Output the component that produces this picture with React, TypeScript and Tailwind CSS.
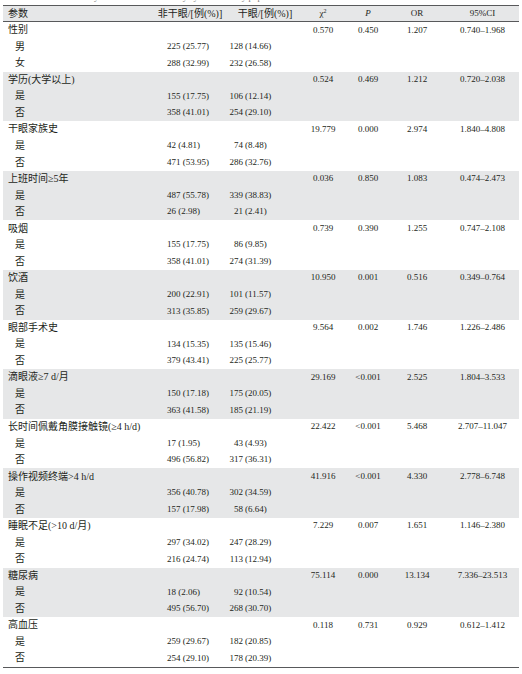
const font = { fontFamily: '"Liberation Serif", "Noto Sans CJK SC", serif' };

type Group = {
  label: string;
  chi: string;
  p: string;
  or: string;
  ci: string;
  rows: [string, string, string, string, string][];
};

const groups: Group[] = [
  { label: "性别", chi: "0.570", p: "0.450", or: "1.207", ci: "0.740–1.968", rows: [["男", "225", "25.77", "128", "14.66"], ["女", "288", "32.99", "232", "26.58"]] },
  { label: "学历(大学以上)", chi: "0.524", p: "0.469", or: "1.212", ci: "0.720–2.038", rows: [["是", "155", "17.75", "106", "12.14"], ["否", "358", "41.01", "254", "29.10"]] },
  { label: "干眼家族史", chi: "19.779", p: "0.000", or: "2.974", ci: "1.840–4.808", rows: [["是", "42", "4.81", "74", "8.48"], ["否", "471", "53.95", "286", "32.76"]] },
  { label: "上班时间≥5年", chi: "0.036", p: "0.850", or: "1.083", ci: "0.474–2.473", rows: [["是", "487", "55.78", "339", "38.83"], ["否", "26", "2.98", "21", "2.41"]] },
  { label: "吸烟", chi: "0.739", p: "0.390", or: "1.255", ci: "0.747–2.108", rows: [["是", "155", "17.75", "86", "9.85"], ["否", "358", "41.01", "274", "31.39"]] },
  { label: "饮酒", chi: "10.950", p: "0.001", or: "0.516", ci: "0.349–0.764", rows: [["是", "200", "22.91", "101", "11.57"], ["否", "313", "35.85", "259", "29.67"]] },
  { label: "眼部手术史", chi: "9.564", p: "0.002", or: "1.746", ci: "1.226–2.486", rows: [["是", "134", "15.35", "135", "15.46"], ["否", "379", "43.41", "225", "25.77"]] },
  { label: "滴眼液≥7 d/月", chi: "29.169", p: "<0.001", or: "2.525", ci: "1.804–3.533", rows: [["是", "150", "17.18", "175", "20.05"], ["否", "363", "41.58", "185", "21.19"]] },
  { label: "长时间佩戴角膜接触镜(≥4 h/d)", chi: "22.422", p: "<0.001", or: "5.468", ci: "2.707–11.047", rows: [["是", "17", "1.95", "43", "4.93"], ["否", "496", "56.82", "317", "36.31"]] },
  { label: "操作视频终端>4 h/d", chi: "41.916", p: "<0.001", or: "4.330", ci: "2.778–6.748", rows: [["是", "356", "40.78", "302", "34.59"], ["否", "157", "17.98", "58", "6.64"]] },
  { label: "睡眠不足(>10 d/月)", chi: "7.229", p: "0.007", or: "1.651", ci: "1.146–2.380", rows: [["是", "297", "34.02", "247", "28.29"], ["否", "216", "24.74", "113", "12.94"]] },
  { label: "糖尿病", chi: "75.114", p: "0.000", or: "13.134", ci: "7.336–23.513", rows: [["是", "18", "2.06", "92", "10.54"], ["否", "495", "56.70", "268", "30.70"]] },
  { label: "高血压", chi: "0.118", p: "0.731", or: "0.929", ci: "0.612–1.412", rows: [["是", "259", "29.67", "182", "20.85"], ["否", "254", "29.10", "178", "20.39"]] },
];

const cols = "grid grid-cols-[145px_84px_66px_50px_40px_58px_73px] items-center";

function GroupBlock({ g, shaded }: { g: Group; shaded: boolean }) {
  return (
    <div className={`grid h-[49.6px] grid-rows-3 ${shaded ? "bg-[#e6e7e8]" : ""}`}>
      <div className={cols}>
        <div className="pl-[5px] text-[10px] leading-none">{g.label}</div>
        <div />
        <div />
        <div className="text-center">{g.chi}</div>
        <div className="text-center">{g.p}</div>
        <div className="text-center">{g.or}</div>
        <div className="text-center">{g.ci}</div>
      </div>
      {g.rows.map((r) => (
        <div key={r[0]} className={cols}>
          <div className="pl-[12px] text-[10px] leading-none">{r[0]}</div>
          <div className="pl-[19px] whitespace-pre">{`${r[1]} (${r[2]})`}</div>
          <div className="-ml-[4px] flex">
            <span className="w-[15px] text-right">{r[3]}</span>
            <span className="pl-[2px]">({r[4]})</span>
          </div>
          <div />
          <div />
          <div />
          <div />
        </div>
      ))}
    </div>
  );
}

export default function App() {
  return (
    <div className="h-[674px] w-[522px] overflow-hidden bg-white text-[9px] text-[#231f20]" style={font}>
      <div className="h-[5px] overflow-hidden pl-[10px] text-[9px] leading-[9px] text-[#777]">
        <div className="-mt-[7px]">Table 1  Univariate analysis of risk factors for dry eye in the study population</div>
      </div>
      <div className="px-[3px]">
        <div className="border-t-[1.5px] border-b-[1.5px] border-[#58595b] bg-[#e6e7e8]">
          <div className={`${cols} h-[15px]`}>
            <div className="pl-[5px] text-[10px] leading-none">参数</div>
            <div className="text-center text-[10px] leading-none">非干眼/[例(%)]</div>
            <div className="text-center text-[10px] leading-none">干眼/[例(%)]</div>
            <div className="text-center">
              χ<sup className="text-[6px]">2</sup>
            </div>
            <div className="text-center italic">P</div>
            <div className="text-center">OR</div>
            <div className="text-center">95%CI</div>
          </div>
        </div>
        <div className="border-b-[1.5px] border-[#58595b]">
          {groups.map((g, i) => (
            <GroupBlock key={g.label} g={g} shaded={i % 2 === 1} />
          ))}
        </div>
      </div>
    </div>
  );
}
